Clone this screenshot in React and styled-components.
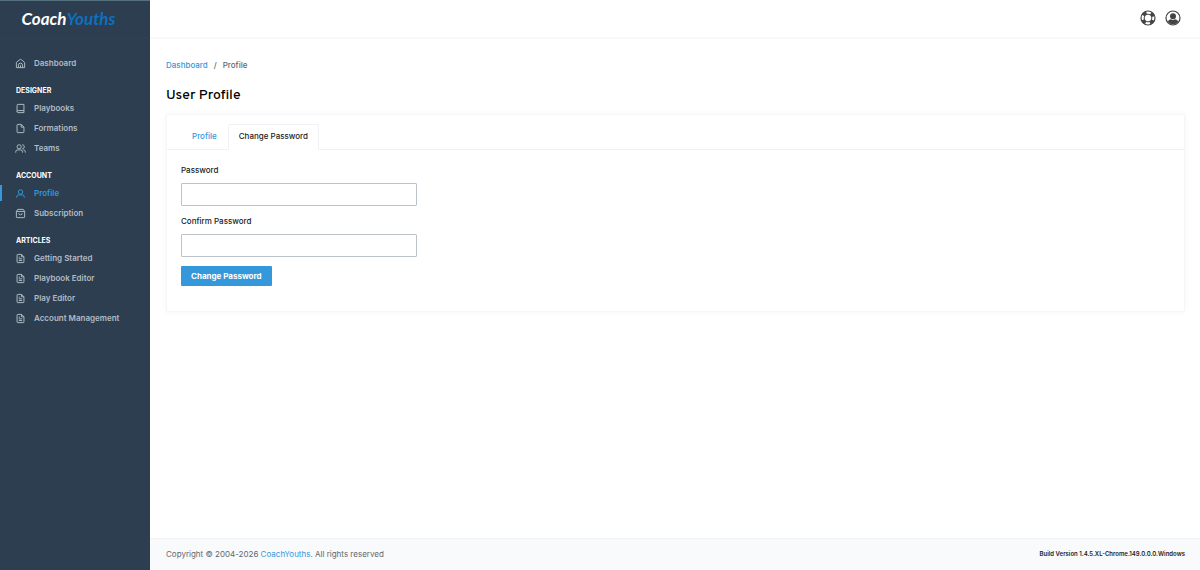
import React, { useState } from 'react'
import styled, { createGlobalStyle } from 'styled-components'

const GlobalStyle = createGlobalStyle`
  * {
    box-sizing: border-box;
  }
  body {
    margin: 0;
    background: #fff;
    color: #1b1b1f;
    font-family: Inter, "Liberation Sans", sans-serif;
    font-size: 8px;
    line-height: 12px;
  }
  a {
    color: #3498db;
    text-decoration: none;
  }
`

const icons = {
  home: <path d="M2 14V7.200c0-.6.3-1.100.7-1.500L7 2.400a1.600 1.600 0 0 1 2 0l4.300 3.300c.4.400.7.900.7 1.500V14H2zM5 14v-3.500a3 3 0 0 1 6 0V14M8 10.500V14" />,
  book: <path d="M3 12.500V3.500A1.500 1.500 0 0 1 4.500 2H13v12H4.500A1.500 1.500 0 0 1 3 12.500 1.500 1.500 0 0 1 4.500 11H13" />,
  file: <path d="M9 2H4a1 1 0 0 0-1 1v10a1 1 0 0 0 1 1h8a1 1 0 0 0 1-1V6L9 2zv4h4" />,
  users: <path d="M6 8.500a3 3 0 1 0 0-6 3 3 0 0 0 0 6zM1 14v-1a3 3 0 0 1 3-3h4a3 3 0 0 1 3 3v1M10.500 2.500a3 3 0 0 1 0 6M12 10a3 3 0 0 1 3 3v1" />,
  user: <path d="M8 9a3.200 3.200 0 1 0 0-6.400A3.200 3.200 0 0 0 8 9zM2.500 14v-1a3 3 0 0 1 3-3h5a3 3 0 0 1 3 3v1" />,
  bag: <path d="M4 2h8l2 3v8a1 1 0 0 1-1 1H3a1 1 0 0 1-1-1V5zM2 5h12M5.500 7.500a2.500 2.500 0 0 0 5 0" />,
  doc: <path d="M9.500 2H4a1 1 0 0 0-1 1v10a1 1 0 0 0 1 1h8a1 1 0 0 0 1-1V5.500L9.500 2zv3.500H13M5.500 6h2M5.500 8.500h5M5.500 11h5" />,
}

const sections = [
  { items: [{ label: 'Dashboard', icon: 'home' }] },
  {
    title: 'DESIGNER',
    items: [
      { label: 'Playbooks', icon: 'book' },
      { label: 'Formations', icon: 'file' },
      { label: 'Teams', icon: 'users' },
    ],
  },
  {
    title: 'ACCOUNT',
    items: [
      { label: 'Profile', icon: 'user', active: true },
      { label: 'Subscription', icon: 'bag' },
    ],
  },
  {
    title: 'ARTICLES',
    items: [
      { label: 'Getting Started', icon: 'doc' },
      { label: 'Playbook Editor', icon: 'doc' },
      { label: 'Play Editor', icon: 'doc' },
      { label: 'Account Management', icon: 'doc' },
    ],
  },
]

function App() {
  const [tab, setTab] = useState('password')

  return (
    <Page>
      <GlobalStyle />
      <Sidebar>
        <Brand href="#">
          Coach<BrandAccent>Youths</BrandAccent>
        </Brand>
        <Nav>
          {sections.map((section, i) => (
            <div key={i}>
              {section.title && <NavTitle>{section.title}</NavTitle>}
              {section.items.map(item => (
                <NavLink href="#" key={item.label} $active={item.active}>
                  <NavIcon viewBox="0 0 16 16">{icons[item.icon]}</NavIcon>
                  {item.label}
                </NavLink>
              ))}
            </div>
          ))}
        </Nav>
      </Sidebar>
      <Main>
        <Header>
          <IconButton aria-label="Help">
            <svg width="16" height="16" viewBox="0 0 16 16" fill="none" stroke="#444">
              <circle cx="8" cy="8" r="7" strokeWidth="1.2" />
              <circle cx="8" cy="8" r="3.900" strokeWidth="1" />
              <circle cx="8" cy="8" r="5.400" strokeWidth="3.200" strokeDasharray="4 4.482" strokeDashoffset="-2.240" />
            </svg>
          </IconButton>
          <IconButton aria-label="Account">
            <svg width="16" height="16" viewBox="0 0 16 16">
              <circle cx="8" cy="8" r="7" fill="none" stroke="#444" strokeWidth="1.200" />
              <circle cx="8" cy="6.200" r="3" fill="#444" />
              <path d="M2.800 12c.6-1.800 1.800-2.500 3.200-2.700a4 4 0 0 0 4 0c1.400.2 2.600.9 3.200 2.700A6.700 6.700 0 0 1 8 14.500 6.700 6.700 0 0 1 2.800 12z" fill="#444" />
            </svg>
          </IconButton>
        </Header>
        <Content>
          <Breadcrumb aria-label="Breadcrumb">
            <a href="#">Dashboard</a>
            <span>/</span>
            <span>Profile</span>
          </Breadcrumb>
          <Title>User Profile</Title>
          <Card>
            <Tabs role="tablist">
              <Tab role="tab" aria-selected={tab === 'profile'} $active={tab === 'profile'} onClick={() => setTab('profile')}>
                Profile
              </Tab>
              <Tab role="tab" aria-selected={tab === 'password'} $active={tab === 'password'} onClick={() => setTab('password')}>
                Change Password
              </Tab>
            </Tabs>
            <Form onSubmit={e => e.preventDefault()}>
              <Label htmlFor="password">Password</Label>
              <Input id="password" type="password" />
              <Label htmlFor="confirm">Confirm Password</Label>
              <Input id="confirm" type="password" />
              <Submit type="submit">Change Password</Submit>
            </Form>
          </Card>
        </Content>
        <Footer>
          <span>
            Copyright © 2004-2026 <a href="#">CoachYouths</a>. All rights reserved
          </span>
          <Version>Build Version 1.4.5.XL-Chrome.149.0.0.0.Windows</Version>
        </Footer>
      </Main>
    </Page>
  )
}

const Page = styled.div`
  display: flex;
  min-height: 100vh;
`

const Sidebar = styled.aside`
  flex: 0 0 150px;
  background: #2c3e50;
  border-top: 1px solid #54707c;
`

const Brand = styled.a`
  display: flex;
  align-items: center;
  justify-content: center;
  height: 38px;
  padding: 0 13px 2px 0;
  border-bottom: 1px solid #304153;
  color: #fff;
  font-family: "URW Chancery L", Lato, cursive;
  font-size: 17px;
  font-style: italic;
  font-weight: 700;
`

const BrandAccent = styled.span`
  color: #0e70be;
`

const Nav = styled.nav`
  padding-top: 14px;
`

const NavTitle = styled.div`
  height: 25px;
  padding: 12px 16px 0;
  color: #fff;
  font-size: 7px;
  font-weight: 700;
`

const NavLink = styled.a`
  display: flex;
  align-items: center;
  gap: 8px;
  height: 20px;
  padding: 0 15px;
  color: ${props => (props.$active ? '#3498db' : '#b3bcc5')};
  font-weight: 600;
  background: ${props => (props.$active ? 'linear-gradient(#3498db, #3498db) left center / 2px 16px no-repeat' : 'none')};
`

const NavIcon = styled.svg`
  width: 11px;
  height: 11px;
  fill: none;
  stroke: currentColor;
  stroke-width: 1.4;
  stroke-linejoin: round;
`

const Main = styled.main`
  display: flex;
  flex: 1;
  flex-direction: column;
  min-width: 0;
`

const Header = styled.header`
  display: flex;
  align-items: center;
  justify-content: flex-end;
  gap: 9px;
  height: 39px;
  padding: 0 19px 2px;
  border-bottom: 2px solid #f9f9fa;
`

const IconButton = styled.button`
  display: flex;
  padding: 0;
  border: 0;
  background: none;
  cursor: pointer;
`

const Content = styled.div`
  flex: 1;
  padding: 20px 15px 20px 16px;
`

const Breadcrumb = styled.nav`
  display: flex;
  gap: 6px;
  color: #63686e;
  font-weight: 500;
`

const Title = styled.h1`
  margin: 15px 0 8px;
  color: #000;
  font-family: Overpass, "Noto Sans", sans-serif;
  font-size: 14px;
  font-weight: 500;
  line-height: 20px;
`

const Card = styled.section`
  padding-bottom: 11px;
  border: 1px solid #f5f6f8;
  border-radius: 2px;
  box-shadow: 0 0 6px #f4f5f7;
`

const Tabs = styled.div`
  display: flex;
  padding: 9px 14px 0;
  border-bottom: 1px solid #f0f1f4;
`

const Tab = styled.button`
  height: 26px;
  margin-bottom: -1px;
  padding: 0 10px 2px;
  border: 1px solid ${props => (props.$active ? '#f0f1f4' : 'transparent')};
  border-bottom-color: ${props => (props.$active ? '#fff' : 'transparent')};
  border-radius: 2px 2px 0 0;
  background: ${props => (props.$active ? '#fff' : 'none')};
  color: ${props => (props.$active ? '#1b1b1f' : '#3498db')};
  font: inherit;
  font-weight: 500;
  cursor: pointer;
`

const Form = styled.form`
  display: flex;
  flex-direction: column;
  align-items: flex-start;
  padding: 14px;
`

const Label = styled.label`
  margin-bottom: 7px;
  font-weight: 500;
`

const Input = styled.input`
  width: 100%;
  max-width: 236px;
  height: 23px;
  margin-bottom: 9px;
  padding: 0 8px;
  border: 1px solid #bcc2c9;
  border-radius: 1px;
  background: #fff;
  font: inherit;
`

const Submit = styled.button`
  height: 20px;
  padding: 0 10px;
  border: 0;
  border-radius: 1px;
  background: #3498db;
  color: #fff;
  font: inherit;
  font-weight: 700;
  cursor: pointer;
`

const Footer = styled.footer`
  display: flex;
  align-items: center;
  justify-content: space-between;
  height: 32px;
  padding: 0 15px 2px 16px;
  border-top: 1px solid #f0f2f4;
  background: #f9fafb;
  color: #63686e;
`

const Version = styled.span`
  color: #1b1b1f;
  font-size: 6px;
  font-weight: 600;
`

export default App
